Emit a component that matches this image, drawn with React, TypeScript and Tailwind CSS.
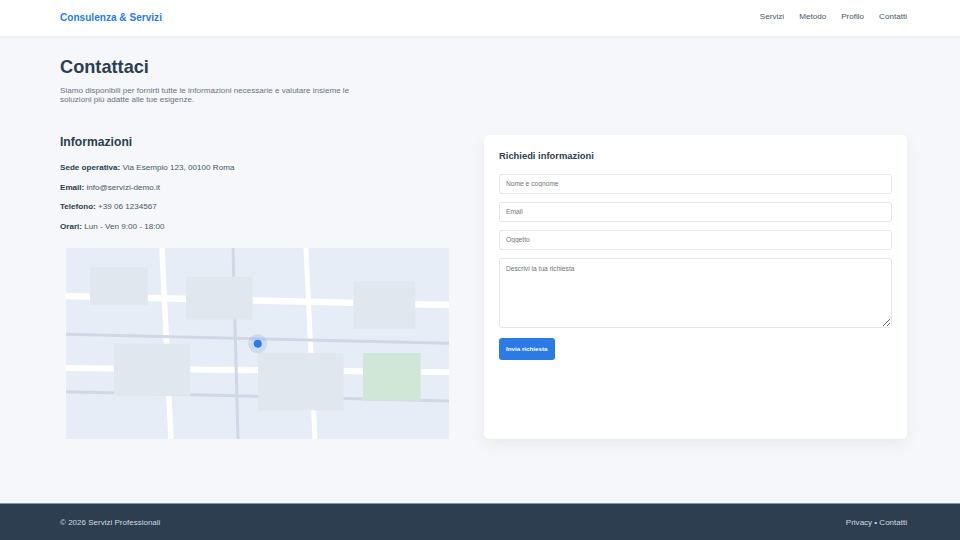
export default function App() {
  const fontStack = "font-['Liberation_Sans',Arial,sans-serif]";
  const field =
    "block w-full h-5 rounded-[3px] border border-[#e3e6eb] bg-white px-[6px] pt-[0.5px] text-[6.67px] text-[#2c3e50] placeholder:text-[#757575] outline-none font-['Liberation_Sans',Arial,sans-serif]";
  return (
    <div className={`flex h-[540px] w-[960px] flex-col overflow-hidden bg-[#f5f7fb] ${fontStack}`}>
      <header className="relative z-10 flex h-[35.5px] shrink-0 items-center justify-between bg-white pb-[1px] pl-[60px] pr-[53px] shadow-[0_1px_4px_rgba(0,0,0,0.06)]">
        <div className="text-[10.08px] font-bold text-[#2c7be5]">Consulenza &amp; Servizi</div>
        <nav className="flex gap-[15px] text-[8.1px] text-[#4a5563]">
          <span>Servizi</span>
          <span>Metodo</span>
          <span>Profilo</span>
          <span>Contatti</span>
        </nav>
      </header>

      <main className="flex-1 pl-[60px] pr-[53px] pt-[20px]">
        <h1 className="text-[18.2px] font-bold leading-[23px] text-[#2c3e50]">Contattaci</h1>
        <p className="mt-[7px] w-[300px] text-[8.08px] leading-[9.33px] text-[#6b7480]">
          Siamo disponibili per fornirti tutte le informazioni necessarie e valutare insieme le soluzioni più adatte
          alle tue esigenze.
        </p>

        <div className="mt-[30.5px] grid grid-cols-[394px_423px] gap-[30px]">
          <section>
            <h2 className="text-[12.15px] font-bold leading-[15px] text-[#2c3e50]">Informazioni</h2>
            <div className="mt-[13.5px] flex flex-col gap-[10.2px] text-[8.1px] leading-[9.33px] text-[#4a5563]">
              <p>
                <strong className="text-[#2c3e50]">Sede operativa:</strong> Via Esempio 123, 00100 Roma
              </p>
              <p>
                <strong className="text-[#2c3e50]">Email:</strong> info@servizi-demo.it
              </p>
              <p>
                <strong className="text-[#2c3e50]">Telefono:</strong> +39 06 1234567
              </p>
              <p>
                <strong className="text-[#2c3e50]">Orari:</strong> Lun - Ven 9:00 - 18:00
              </p>
            </div>
            <svg
              viewBox="0 0 383.3 191.3"
              className="ml-[5.5px] mt-[16.6px] block h-[191.3px] w-[383.3px]"
              aria-hidden="true"
            >
              <rect width="383.3" height="191.3" fill="#e6edf6" />
              <g stroke="#ffffff" fill="none">
                <path d="M0 48 L383.3 57" strokeWidth="6.5" />
                <path d="M0 120 L383.3 124.3" strokeWidth="6" />
                <path d="M96 0 L105 191.3" strokeWidth="5.5" />
                <path d="M240 0 L249 191.3" strokeWidth="5" />
              </g>
              <g stroke="#cfd8e5" fill="none" strokeWidth="3">
                <path d="M0 86.3 L383.3 95.3" />
                <path d="M0 143.7 L383.3 153" />
                <path d="M167 0 L172 191.3" />
              </g>
              <g fill="#e0e7ef">
                <rect x="24" y="19.3" width="57.7" height="37.7" />
                <rect x="120" y="28.7" width="66.7" height="42.7" />
                <rect x="287.3" y="33.3" width="62" height="47.7" />
                <rect x="48" y="95.7" width="76.3" height="52" />
                <rect x="192" y="105" width="85.7" height="57.3" />
              </g>
              <rect x="297" y="105" width="57.7" height="47.7" fill="#d0e7d8" />
              <circle cx="191.7" cy="95.7" r="9.5" fill="#2c7be5" fillOpacity="0.15" />
              <circle cx="191.7" cy="95.7" r="4" fill="#2c7be5" />
            </svg>
          </section>

          <section className="h-[304px] rounded-[5px] bg-white p-[15px] shadow-[0_5px_16px_rgba(0,0,0,0.06)]">
            <h2 className="text-[9.4px] font-bold leading-[12px] text-[#2c3e50]">Richiedi informazioni</h2>
            <form className="mt-[12px] flex flex-col gap-[8px]">
              <input className={field} placeholder="Nome e cognome" />
              <input className={field} placeholder="Email" />
              <input className={field} placeholder="Oggetto" />
              <textarea
                className="block h-[70.5px] w-full rounded-[3px] border border-[#e3e6eb] bg-white px-[6px] py-[6px] text-[6.67px] leading-[8px] text-[#2c3e50] placeholder:text-[#757575] outline-none font-['Liberation_Sans',Arial,sans-serif]"
                placeholder="Descrivi la tua richiesta"
              />
              <button
                type="button"
                className="mt-[1.5px] h-[22px] w-[55.5px] rounded-[3px] bg-[#2c7be5] pt-[0.5px] text-[6.2px] font-bold text-white font-['Liberation_Sans',Arial,sans-serif]"
              >
                Invia richiesta
              </button>
            </form>
          </section>
        </div>
      </main>

      <footer className="flex h-[37px] shrink-0 items-center justify-between border-t border-t-[#8496ab] bg-[#2c3e50] pl-[60px] pr-[53px] pt-[2px] text-[8.03px] text-[#d5dae0]">
        <span>© 2026 Servizi Professionali</span>
        <span>Privacy • Contatti</span>
      </footer>
    </div>
  );
}
